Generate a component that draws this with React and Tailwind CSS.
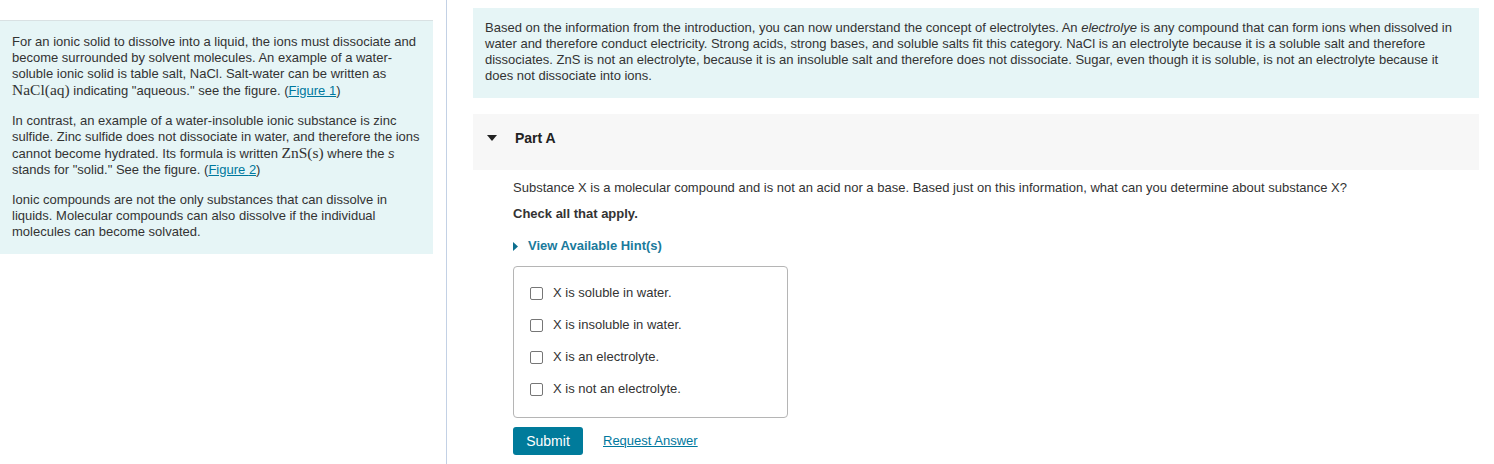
import { useState } from "react";

const options = [
    "X is soluble in water.",
    "X is insoluble in water.",
    "X is an electrolyte.",
    "X is not an electrolyte.",
];

function Math({ children }) {
    return (
        <span className="text-[15.5px] leading-none font-['Liberation_Serif',serif]">{children}</span>
    );
}

function Figure({ n }) {
    return (
        <>
            (<a className="text-[#00789e] underline cursor-pointer">Figure {n}</a>)
        </>
    );
}

export default function App() {
    const [checked, setChecked] = useState([false, false, false, false]);

    const toggle = (i) => {
        setChecked((c) => c.map((v, j) => (j === i ? !v : v)));
    };

    return (
        <div className="flex w-[1494px] h-[464px] bg-white text-[#333] font-['Liberation_Sans',Arial,sans-serif] text-[13px] leading-[16px] overflow-hidden">
            {/* left: introduction */}
            <div className="w-[447px] shrink-0 border-r border-[#c3d1e5] pt-5">
                <div className="w-[433px] bg-[#e6f5f6] border-t border-[#d9e1e3] pl-3 pr-3 pt-[13px] pb-[14px] space-y-[14px]">
                    <p>
                        For an ionic solid to dissolve into a liquid, the ions must dissociate and become surrounded by
                        solvent molecules. An example of a water-soluble ionic solid is table salt, NaCl. Salt-water can be
                        written as <Math>NaCl(aq)</Math> indicating "aqueous." see the figure. <Figure n={1} />
                    </p>
                    <p>
                        In contrast, an example of a water-insoluble ionic substance is zinc sulfide. Zinc sulfide does not
                        dissociate in water, and therefore the ions cannot become hydrated. Its formula is written{" "}
                        <Math>ZnS(s)</Math> where the <i>s</i> stands for "solid." See the figure. <Figure n={2} />
                    </p>
                    <p>
                        Ionic compounds are not the only substances that can dissolve in liquids. Molecular compounds can
                        also dissolve if the individual molecules can become solvated.
                    </p>
                </div>
            </div>

            {/* right: part A */}
            <div className="flex-1 pl-[26px] pr-[15px] pt-2">
                <div className="bg-[#e6f5f6] pl-3 pr-3 pt-3 pb-[14px]">
                    Based on the information from the introduction, you can now understand the concept of electrolytes. An{" "}
                    <i>electrolye</i> is any compound that can form ions when dissolved in water and therefore conduct
                    electricity. Strong acids, strong bases, and soluble salts fit this category. NaCl is an electrolyte
                    because it is a soluble salt and therefore dissociates. ZnS is not an electrolyte, because it is an
                    insoluble salt and therefore does not dissociate. Sugar, even though it is soluble, is not an
                    electrolyte because it does not dissociate into ions.
                </div>

                <div className="mt-4 h-[56px] bg-[#f7f7f7] flex items-center pl-[14px] pb-[9px]">
                    <svg width="10" height="6" viewBox="0 0 10 6" className="mr-[18px]">
                        <path d="M0 0 H10 L5 6 Z" fill="#222" />
                    </svg>
                    <span className="font-bold text-[14px] text-[#222]">Part A</span>
                </div>

                <div className="pl-10">
                    <p className="mt-[10px]">
                        Substance X is a molecular compound and is not an acid nor a base. Based just on this information,
                        what can you determine about substance X?
                    </p>
                    <p className="mt-[10px] font-bold text-[13px]">Check all that apply.</p>
                    <div className="mt-[16px] flex items-center gap-[10px] font-bold text-[13px] text-[#1a7a9c] cursor-pointer">
                        <svg width="5" height="9" viewBox="0 0 5 9">
                            <path d="M0 0 L5 4.5 L0 9 Z" fill="#0d6f8f" />
                        </svg>
                        View Available Hint(s)
                    </div>

                    <div className="mt-[12px] w-[275px] h-[152px] border border-[#b5b5b5] rounded pl-4 pt-[10px]">
                        {options.map((o, i) => (
                            <label key={o} className="flex items-center h-[32px] gap-[10px] cursor-pointer">
                                <input
                                    type="checkbox"
                                    checked={checked[i]}
                                    onChange={() => toggle(i)}
                                    className="appearance-none w-[13px] h-[13px] border border-[#767676] rounded-[2px] bg-white checked:bg-[#0075c4]"
                                />
                                <span className="text-[13px]">{o}</span>
                            </label>
                        ))}
                    </div>

                    <div className="mt-[9px] flex items-center gap-5">
                        <button className="w-[70px] h-[28px] bg-[#007b9b] text-white text-[14px] rounded-[3px]">
                            Submit
                        </button>
                        <a className="text-[#00789e] underline text-[13px] cursor-pointer">Request Answer</a>
                    </div>
                </div>
            </div>
        </div>
    );
}
